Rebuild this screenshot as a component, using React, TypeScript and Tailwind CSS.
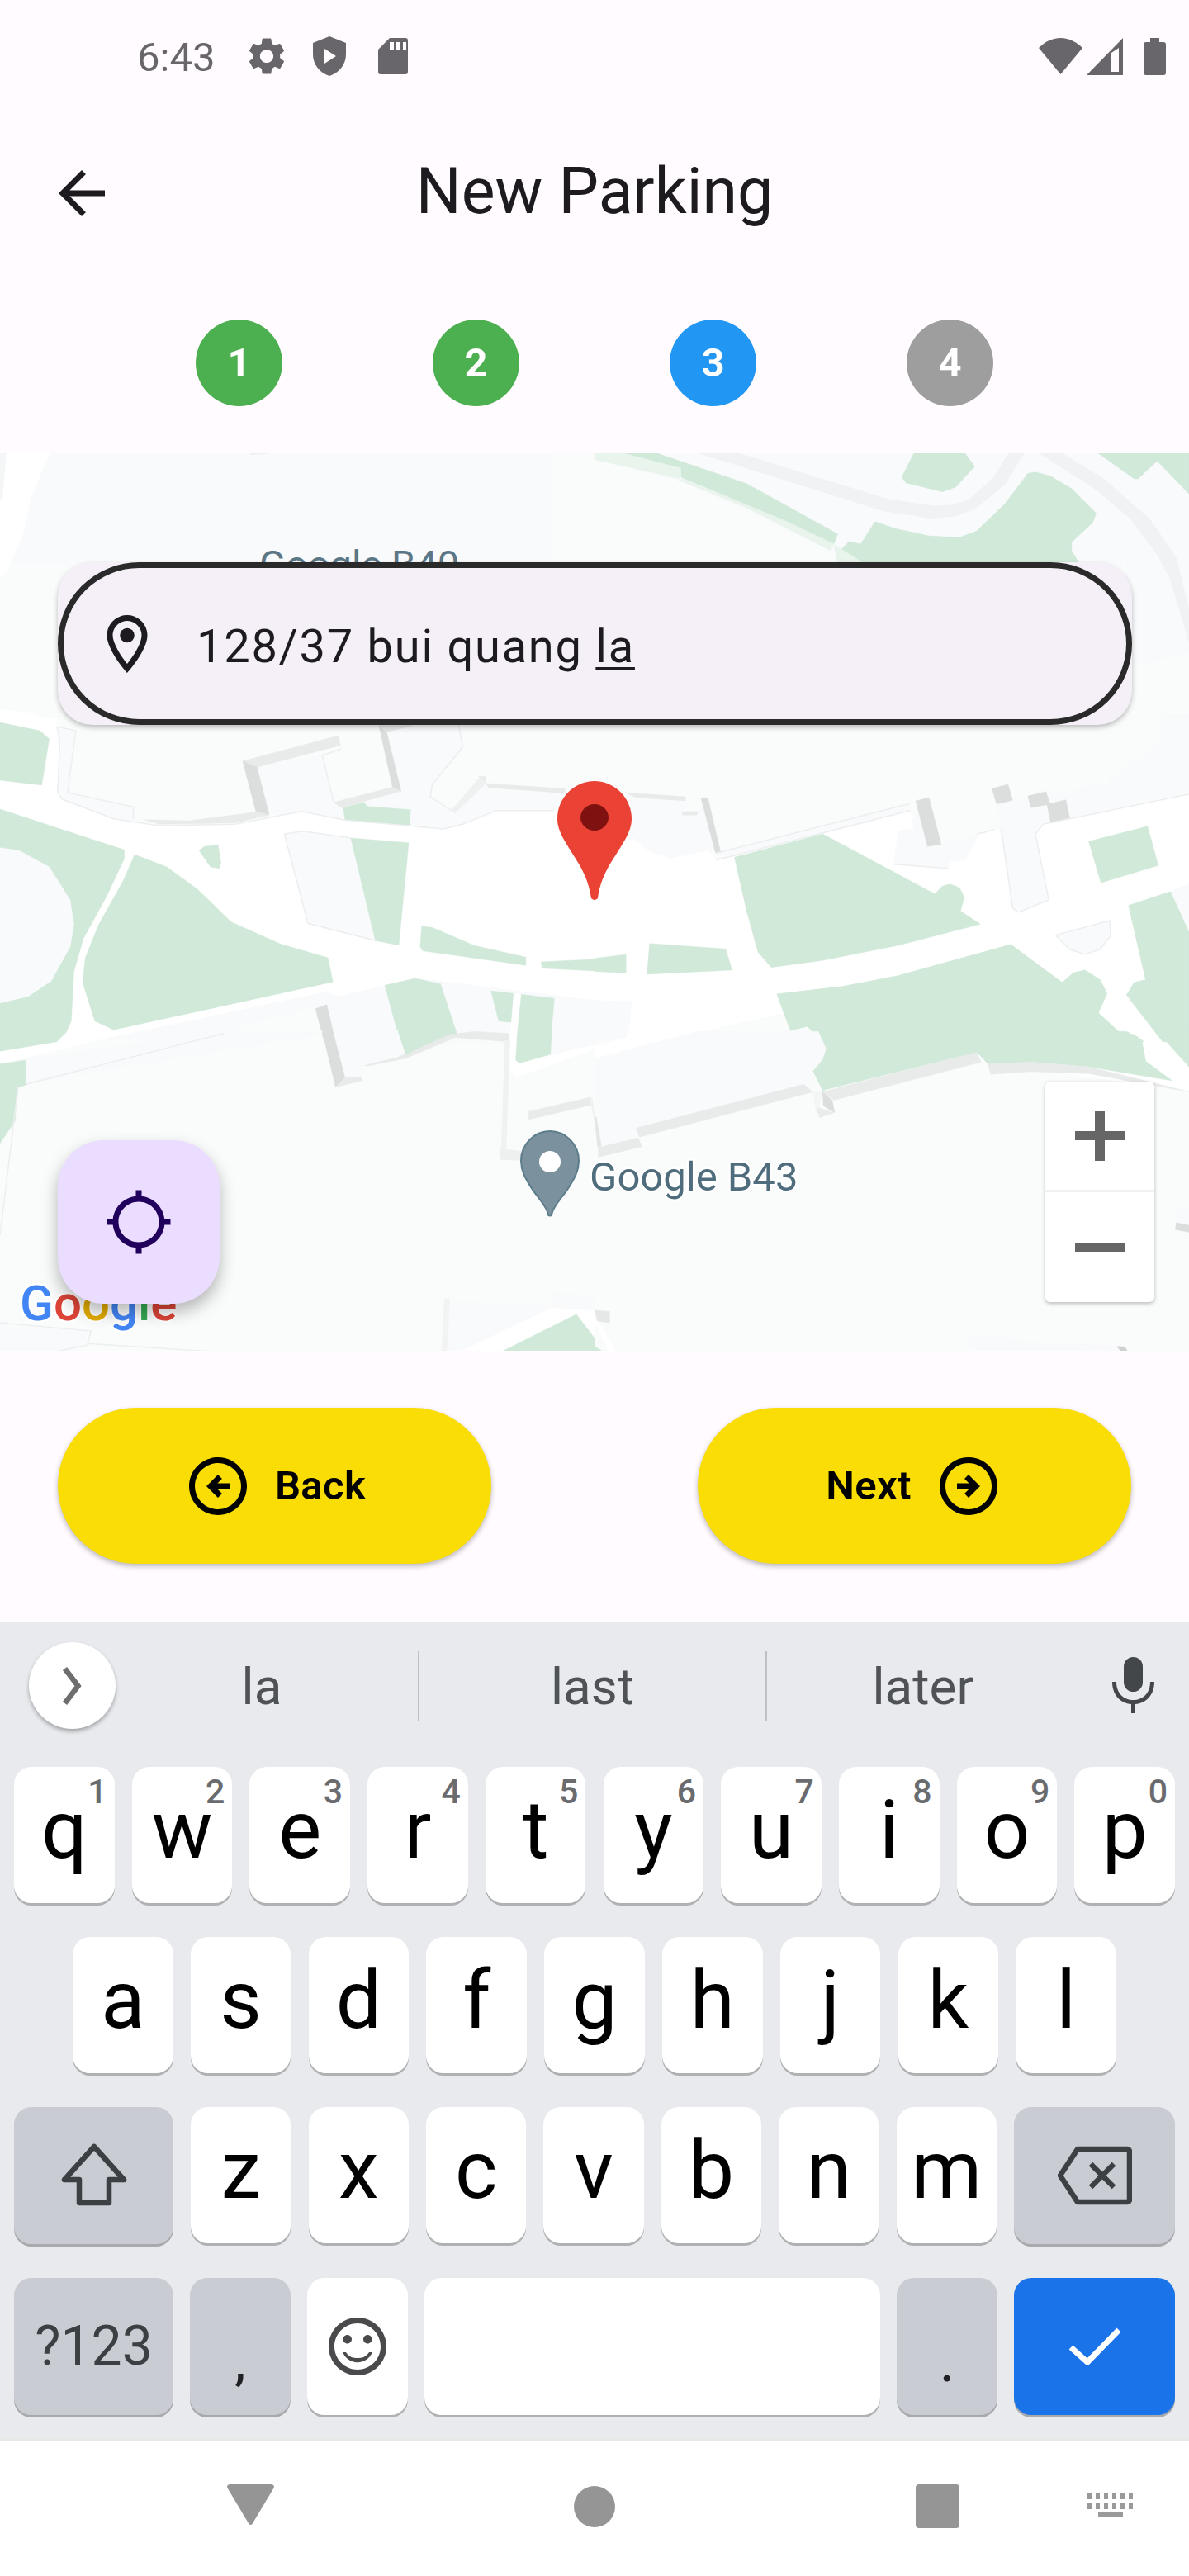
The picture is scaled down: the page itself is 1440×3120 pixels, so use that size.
import React from "react";

const GREEN = "#d0e9d9";
const LOT = "#f9fafc";
const SIDE = "#e9eaea";
const DARK = "#dcdddd";
const ROAD = "#f1f2f3";
const LINE = "#eceeef";

type Shape = [string, string];

const Z2 = "translate(0 -9) scale(.9184 .3571)";
const Z8 = "translate(0 321) scale(.4592 .3333)";
const Z9 = "translate(720 321) scale(.4604 .3333)";
const Z10 = "translate(0 701) scale(.4592 .3368)";
const Z11 = "translate(720 701) scale(.4604 .3368)";
const Z12 = "translate(720 -4) scale(.4604 .3333)";

function Shapes({ t, items }: { t: string; items: Shape[] }) {
  return (
    <g transform={t}>
      {items.map(([c, p], i) => (
        <polygon key={i} fill={c} points={p} stroke={c} strokeWidth="1" strokeLinejoin="round" />
      ))}
    </g>
  );
}

function Lines({ t, items }: { t: string; items: string[] }) {
  return (
    <g transform={t} fill="none" stroke={LINE} strokeWidth="1.500">
      {items.map((p, i) => (
        <polyline key={i} points={p} vectorEffect="non-scaling-stroke" />
      ))}
    </g>
  );
}

const top12: Shape[] = [
  [LOT, "0,10 1564,10 1564,735 1400,790 1400,410 700,410 620,360 220,110 0,35"],
  ["#e8f4ec", "0,35 225,105 228,65 75,10 0,10"],
  ["#e8f4ec", "220,108 400,210 620,365 630,340 500,255 230,105"],
  ["#e8f4ec", "630,345 655,365 710,412 640,412"],
  [GREEN, "80,12 165,12 400,122 640,305 630,340 500,255 228,100 228,65"],
  [GREEN, "650,360 670,332 700,342 738,260 790,285 880,312 960,318 1005,295 1080,195 1140,85 1160,80 1200,95 1255,140 1320,230 1310,265 1255,335 1255,365 1275,412 710,412"],
  [GREEN, "840,12 975,12 1000,60 950,135 915,152 820,120 808,100"],
  [GREEN, "1325,12 1564,12 1564,160 1480,40 1430,105 1420,105"],
  [ROAD, "275,12 380,12 770,178 895,204 940,200 985,180 1050,100 1090,12 1130,12 1080,125 1000,215 950,240 890,250 760,222"],
  [ROAD, "1170,12 1230,12 1340,105 1460,250 1530,390 1564,580 1564,700 1515,470 1480,380 1410,250 1310,135"],
];

const top2: Shape[] = [
  [LOT, "65,25 730,25 730,400 0,400 0,450 10,420 30,300 40,180"],
  ["#ffffff", "0,25 65,25 40,180 30,300 10,420 0,450"],
  ["#f4f5f6", "0,25 8,25 3,180 0,185"],
  ["#ffffff", "0,895 40,905 75,945 95,990 0,990"],
  ["#eeeff0", "330,25 355,25 330,30"],
];

const a8: Shape[] = [
  ["#fafbfb", "150,-10 1568,-10 1568,420 1460,335 1310,335 1220,385 1170,402 910,370 795,338 620,385 420,390 300,365 165,295 152,270 158,80 150,30"],
  [LOT, "150,30 200,45 178,270 352,322 352,365 420,390 300,365 165,295 152,270 158,80"],
  [LOT, "678,178 850,130 880,305 710,350"],
  [LOT, "710,350 880,305 905,325 905,365 795,338"],
  [LOT, "1085,390 1085,332 970,320 960,305 1058,265 1020,50 1210,25 1220,105 1140,240 1135,285 1190,335 1200,345 1270,235 1290,252 1490,272 1460,335 1310,335 1220,385 1170,402"],
  [SIDE, "640,155 892,63 898,98 678,178"],
  [DARK, "640,155 678,178 710,350 675,340"],
  [SIDE, "380,368 500,372 680,340 710,352 620,380 420,385"],
  [DARK, "1000,30 1020,50 1058,265 1035,250"],
  [SIDE, "1035,250 1058,265 900,325 880,305"],
  [SIDE, "1000,30 1020,50 1090,26 1000,26"],
  [SIDE, "1262,210 1282,212 1280,236 1490,256 1490,272 1290,252"],
  ["#eff0f0", "1265,215 1282,235 1200,345 1190,335"],
  [GREEN, "0,15 105,45 130,75 110,243 0,225"],
  [GREEN, "905,325 960,305 970,320 1083,332 1080,390 910,368"],
  [LOT, "750,420 800,410 925,435 990,808 812,745"],
  [GREEN, "925,435 1078,452 1052,825 990,808"],
  [GREEN, "525,480 540,465 575,460 583,525 578,545 555,540"],
  [GREEN, "1112,755 1140,760 1250,825 1387,868 1387,898 1115,845 1108,830"],
  [GREEN, "1427,885 1568,875 1568,918 1430,908"],
  [GREEN, "355,495 440,540 520,620 610,740 740,820 865,870 878,958 300,1132 250,1100 218,960 225,870 260,750 325,590"],
  [GREEN, "0,330 328,478 328,510 280,650 220,800 195,920 188,1100 175,1140 150,1175 0,1210"],
  [LOT, "0,470 50,480 130,540 185,660 195,750 185,830 135,955 75,1010 0,1035"],
];

const a8lines = [
  "150,30 200,45 178,270 352,322 352,365",
  "150,30 158,80 152,270 165,295 300,365 420,390 620,385 795,338 910,370 1170,402 1220,385 1310,335 1460,335",
  "850,135 880,305",
  "850,135 900,112",
  "1210,25 1220,105 1140,240 1135,285 1190,335",
  "750,420 800,410 925,435",
  "750,420 812,745 990,808",
];

const page: Shape[] = [
  ["#fafbfb", "0,1289 129,1258 393,1202 411,1207 503,1185 720,1212 764,1213 759,1257 805,1260 948,1228 1000,1260 1440,1322 1440,1640 0,1640"],
];

const a8b: Shape[] = [
  [LOT, "855,995 895,1012 1095,945 1568,1025 1568,1180 860,1180 832,1050 500,1165 280,1165"],
  [GREEN, "1015,970 1095,945 1162,965 1205,1145 1150,1175 1055,1175"],
  [GREEN, "1295,990 1355,1000 1348,1105 1315,1100"],
  ["#ffffff", "1355,1000 1375,1003 1362,1175 1345,1175"],
  [GREEN, "1375,1003 1462,1018 1452,1175 1362,1175"],
  [DARK, "832,1055 862,1040 885,1175 855,1175"],
];

const b9: Shape[] = [
  ["#fafbfb", "0,-10 1564,-10 1564,275 1180,385 1160,420 1195,660 1115,705 1100,690 1070,400 1010,420 975,515 935,520 930,545 787,530 800,410 840,400 830,335 600,420 320,515 300,480 200,508 140,480 90,420 0,335"],
  [LOT, "80,270 240,285 235,350 275,350 285,290 330,490 300,480 200,508 140,480 90,420 0,335"],
  [LOT, "320,490 830,310 830,335 600,420 320,515"],
  [LOT, "787,530 800,410 840,400 845,300 910,460 1010,420 975,515 935,520 930,545"],
  [LOT, "1055,310 1330,240 1330,340 1180,385 1160,420 1195,660 1115,705 1100,690"],
  [LOT, "1480,30 1490,90 1350,220 1350,245 1320,265 1335,335 1564,270 1564,-10 1500,-10"],
  [SIDE, "80,270 240,285 240,300 110,288"],
  [SIDE, "230,340 275,338 268,352 232,352"],
  [DARK, "280,290 298,288 332,488 318,488"],
  [DARK, "845,300 880,288 912,458 876,466"],
  [DARK, "1045,255 1088,240 1100,298 1058,312"],
  [DARK, "1140,282 1188,266 1198,312 1148,325"],
  [DARK, "1190,312 1240,296 1250,362 1200,378"],
  [GREEN, "368,505 600,420 895,638 915,610 935,602 960,615 973,650 963,700 1015,748 800,825 600,880 465,905 430,850 400,700"],
  [GREEN, "0,872 83,858 83,925 0,920"],
  [GREEN, "145,818 345,838 362,915 138,930"],
  [GREEN, "1300,447 1455,392 1483,535 1332,598"],
  [LOT, "1213,788 1355,735 1358,790 1330,840 1290,857 1250,840"],
  [LOT, "1515,630 1564,600 1564,780"],
  [LOT, "0,1027 97,1030 88,1160 0,1170"],
  [GREEN, "480,1002 650,975 800,935 930,885 1095,822 1230,960 1260,925 1290,915 1330,950 1348,1000 1325,1070 1380,1140 1420,1150 1445,1175 600,1175 560,1120 515,1135"],
  [GREEN, "1405,680 1515,630 1564,780 1564,1175 1495,1175 1430,1060 1400,1005 1420,960 1450,950"],
];

const b9lines = [
  "320,490 830,310",
  "320,515 830,335",
  "1564,275 1180,385",
  "1050,405 1010,420",
  "787,530 930,545",
  "1070,400 1100,690 1115,705 1195,660 1160,420 1180,385",
  "1213,788 1355,735 1358,790 1330,840 1290,857 1250,840 1213,788",
];

const c10: Shape[] = [
  [GREEN, "0,115 70,100 70,190 45,200 40,320 0,400"],
  [LOT, "68,100 590,-5 850,-5 850,5 68,188"],
  [LOT, "878,-5 1050,-5 1070,80 960,120 955,160 910,165"],
  [DARK, "850,-2 878,-2 910,165 885,198"],
  [SIDE, "910,165 955,160 955,175 885,198"],
  [SIDE, "960,120 1050,90 1180,10 1250,-2 1345,5 1340,35 1200,20 1070,95 970,122"],
  [GREEN, "1050,-2 1200,-2 1070,80"],
  ["#ffffff", "1345,-2 1345,140 1360,165 1568,60 1568,45 1370,112 1360,100 1365,-2"],
  [GREEN, "1365,-2 1455,-2 1452,80 1370,112 1360,100"],
  [LOT, "1460,-2 1568,-2 1568,45 1455,80"],
  ["#f0f1f1", "1332,30 1345,30 1335,420 1322,420"],
  ["#eeefef", "1318,420 1375,428 1375,462 1318,458"],
  [SIDE, "1395,285 1555,235 1560,262 1395,315"],
  ["#f0f1f1", "1555,235 1562,235 1568,300 1568,320"],
  [LOT, "1175,960 1455,990 1200,1158 1165,1158"],
  [LOT, "1455,935 1568,945 1568,1000 1455,990"],
  ["#ffffff", "1200,1158 1455,992 1568,1002 1568,1158"],
  [GREEN, "1310,1158 1520,1015 1568,1100 1568,1158"],
  [LOT, "0,1050 230,1075 225,1120 120,1158 0,1158"],
  ["#f2f3f3", "1172,960 1186,960 1178,1158 1165,1158"],
];

const c10lines = ["48,195 0,730", "0,1045 240,1075 230,1125 120,1158", "230,1120 660,1158", "68,188 590,5"];

const d11: Shape[] = [
  ["#ffffff", "0,50 85,20 88,-2 270,-2 0,95"],
  [LOT, "0,95 270,-2 590,-2 610,60 600,100 575,140 575,190 550,190 115,345 110,375 10,415"],
  [SIDE, "110,345 550,188 575,215 118,378"],
  [SIDE, "10,415 115,380 125,412 10,450"],
  ["#e4e5e5", "0,305 5,305 18,410 8,415"],
  ["#f4f5f5", "575,215 600,215 590,270 585,308"],
  [SIDE, "600,215 1005,72 1018,108 630,245"],
  [DARK, "600,215 625,245 632,290 602,265"],
  [SIDE, "585,270 630,290 592,308"],
  [GREEN, "590,-2 610,60 600,100 575,140 600,210 1005,72 1035,115 1150,108 1300,125 1520,175 1450,105 1440,30 1400,-2"],
  [GREEN, "1480,-2 1564,125 1564,-2"],
  ["#e9eaea", "1035,115 1150,108 1300,125 1450,175 1564,215 1300,150 1150,142 1042,152"],
  [LOT, "1540,630 1564,628 1564,690 1530,685"],
  [DARK, "1530,685 1564,695 1564,720 1528,710"],
  [LOT, "990,1095 1375,1130 1400,1160 990,1160"],
  ["#cfd0d0", "1375,1130 1395,1132 1408,1160 1390,1160"],
  ["#e6e7e7", "0,1000 40,1005 40,1045 8,1040"],
  ["#ffffff", "0,1040 10,1040 60,1160 40,1160"],
  [GREEN, "0,1130 35,1160 0,1160"],
];

function MapArt() {
  return (
    <svg viewBox="0 0 1440 1087" className="block w-[1440px] h-[1087px]">
      <rect x="0" y="0" width="1440" height="1087" fill="#fafbfb" />
      <g transform="translate(0 -549)">
        <rect x="0" y="870" width="1440" height="480" fill="#ffffff" />
      </g>
      <Shapes t={Z2} items={top2} />
      <Shapes t={Z12} items={top12} />
      <Shapes t={Z8} items={a8} />
      <Shapes t={Z9} items={b9} />
      <Shapes t="translate(0 -549)" items={page} />
      <Shapes t={Z8} items={a8b} />
      <Shapes t={Z9} items={b9.slice(-3)} />
      <Shapes t={Z10} items={c10} />
      <Shapes t={Z11} items={d11} />
      <Lines t={Z8} items={a8lines} />
      <Lines t={Z9} items={b9lines} />
      <Lines t={Z10} items={c10lines} />
      <g transform="translate(0 -549)" fontFamily="Roboto, sans-serif">
        <text x="314" y="700" fontSize="47" fill="#5b7685">Google B40</text>
        <path d="M666 1370c-19 0-35 16-35 36 0 12 5 21 14 35 9 13 17 20 19 30 0 2 4 2 4 0 2-10 10-17 19-30 9-14 14-23 14-35 0-20-16-36-35-36z" fill="#7b919d" stroke="#5c7d8c" strokeWidth="2" />
        <ellipse cx="666" cy="1407" rx="13" ry="13" fill="#ffffff" />
        <text x="714" y="1442" fontSize="49" fill="#4f6d7c" stroke="#ffffff" strokeWidth="5" paintOrder="stroke" strokeLinejoin="round">Google B43</text>
        <text x="24" y="1599" fontSize="60" fontWeight="500" stroke="#ffffff" strokeWidth="5" paintOrder="stroke" strokeLinejoin="round">
          <tspan fill="#4285f4">G</tspan>
          <tspan fill="#db4437">o</tspan>
          <tspan fill="#e2ab00">o</tspan>
          <tspan fill="#4285f4">g</tspan>
          <tspan fill="#34a853">l</tspan>
          <tspan fill="#db4437">e</tspan>
        </text>
        <path d="M720 946C696 946 675 966 675 992C675 1002 680 1013 689 1027C700 1045 712 1060 716 1088Q720 1092 724 1088C728 1060 740 1045 751 1027C760 1013 765 1002 765 992C765 966 744 946 720 946Z" fill="#ea4335" />
        <ellipse cx="720" cy="990" rx="17" ry="16" fill="#7f1110" />
      </g>
    </svg>
  );
}

function StatusBar() {
  return (
    <div className="h-[136px] flex items-center pl-[166px] pr-[28px] text-[#68666a]">
      <span className="text-[49px] leading-none pt-[3px] w-[135px]">6:43</span>
      <svg viewBox="0 0 24 24" className="w-[54px] h-[54px] -ml-[5px]" fill="#68666a">
        <path d="M19.14 12.94c.04-.3.06-.61.06-.94 0-.32-.02-.64-.07-.94l2.03-1.58c.18-.14.23-.41.12-.61l-1.92-3.32c-.12-.22-.37-.29-.59-.22l-2.39.96c-.5-.38-1.03-.7-1.62-.94l-.36-2.54c-.04-.24-.24-.41-.48-.41h-3.84c-.24 0-.43.17-.47.41l-.36 2.54c-.59.24-1.13.57-1.62.94l-2.39-.96c-.22-.08-.47 0-.59.22L2.74 8.87c-.12.21-.08.47.12.61l2.03 1.58c-.05.3-.09.63-.09.94s.02.64.07.94l-2.03 1.58c-.18.14-.23.41-.12.61l1.92 3.32c.12.22.37.29.59.22l2.39-.96c.5.38 1.03.7 1.62.94l.36 2.54c.05.24.24.41.48.41h3.84c.24 0 .44-.17.47-.41l.36-2.54c.59-.24 1.13-.56 1.62-.94l2.39.96c.22.08.47 0 .59-.22l1.92-3.32c.12-.22.07-.47-.12-.61l-2.01-1.58zM12 15.6c-1.98 0-3.6-1.62-3.6-3.6s1.62-3.6 3.6-3.6 3.6 1.62 3.6 3.6-1.62 3.6-3.6 3.6z" />
      </svg>
      <svg viewBox="0 0 40 48" className="w-[40px] h-[48px] ml-[29px]" fill="#68666a">
        <path fillRule="evenodd" d="M20 0L40 8v14c0 12-8 22-20 26C8 44 0 34 0 22V8zM14 15v18l14-9z" />
      </svg>
      <svg viewBox="0 0 36 44" className="w-[36px] h-[44px] ml-[39px]" fill="#68666a">
        <path fillRule="evenodd" d="M14 0h19a3 3 0 013 3v38a3 3 0 01-3 3H3a3 3 0 01-3-3V14zM14 5v9h5V5zM22 5v9h5V5zM30 5v9h4V5z" />
      </svg>
      <div className="flex-1" />
      <svg viewBox="0 0 53 44" className="w-[53px] h-[44px]" fill="#68666a">
        <path d="M0 12C7 5 16 0 26.500 0S46 5 53 12L26.500 44z" />
      </svg>
      <svg viewBox="0 0 44 45" className="w-[44px] h-[45px] ml-[5px]">
        <path fill="#68666a" d="M44 0v45H0z" />
        <path fill="#fffbff" d="M30 18l9-6v29h-9z" />
      </svg>
      <svg viewBox="0 0 27 45" className="w-[27px] h-[45px] ml-[25px]" fill="#68666a">
        <path d="M8 0h11v5h5a3 3 0 013 3v34a3 3 0 01-3 3H3a3 3 0 01-3-3V8a3 3 0 013-3h5z" />
      </svg>
    </div>
  );
}

function Header() {
  return (
    <div className="h-[196px] grid grid-cols-[1fr_auto_1fr] items-center text-[#1d1b20]">
      <svg viewBox="0 0 24 24" className="w-[84px] h-[84px] ml-[57px]" fill="currentColor">
        <path d="M20 11H7.830l5.590-5.590L12 4l-8 8 8 8 1.410-1.410L7.830 13H20v-2z" />
      </svg>
      <h1 className="text-[77px] leading-none font-normal pb-[3px]">New Parking</h1>
      <div />
    </div>
  );
}

function Steps() {
  const steps: [string, string][] = [
    ["1", "bg-[#4caf50]"],
    ["2", "bg-[#4caf50]"],
    ["3", "bg-[#2196f3]"],
    ["4", "bg-[#9e9e9e]"],
  ];
  return (
    <div className="h-[217px] flex justify-center gap-[182px] pt-[55px]">
      {steps.map(([n, c]) => (
        <div key={n} className={`w-[105px] h-[105px] rounded-full ${c} flex items-center justify-center text-white text-[49px] font-bold leading-none`}>
          {n}
        </div>
      ))}
    </div>
  );
}

function MapBlock() {
  return (
    <div className="relative h-[1087px] overflow-hidden">
      <MapArt />
      <div className="absolute left-[70px] top-[132px] w-[1301px] h-[197px] rounded-[42px] bg-[#f5f0f8] shadow-[0_3px_6px_rgba(0,0,0,0.25)]">
        <div className="h-full rounded-full border-[7px] border-[#2a2a2a] flex items-center pl-[35px]">
          <svg viewBox="0 0 24 24" className="w-[84px] h-[84px]" fill="#1d1b20">
            <path d="M12 2C8.130 2 5 5.130 5 9c0 5.250 7 13 7 13s7-7.750 7-13c0-3.870-3.130-7-7-7zM7 9c0-2.760 2.240-5 5-5s5 2.240 5 5c0 2.880-2.880 7.190-5 9.880C9.920 16.210 7 11.850 7 9z" />
            <circle cx="12" cy="9" r="2.500" />
          </svg>
          <span className="ml-[42px] pt-[6px] text-[56px] leading-none tracking-[1.75px] text-[#1d1b20]">
            128/37 bui quang <span className="underline decoration-[3px] underline-offset-[6px]">la</span>
          </span>
        </div>
      </div>
      <div className="absolute left-[70px] top-[832px] w-[196px] h-[198px] rounded-[56px] bg-[#eaddff] shadow-[0_10px_20px_rgba(0,0,0,0.28)] flex items-center justify-center">
        <svg viewBox="0 0 24 24" className="w-[84px] h-[84px]" fill="#21005d">
          <path d="M20.940 11c-.460-4.170-3.770-7.480-7.940-7.940V1h-2v2.060C6.830 3.520 3.520 6.830 3.060 11H1v2h2.060c.460 4.170 3.770 7.480 7.940 7.940V23h2v-2.060c4.170-.460 7.480-3.770 7.940-7.940H23v-2h-2.060zM12 19c-3.870 0-7-3.130-7-7s3.130-7 7-7 7 3.130 7 7-3.130 7-7 7z" />
        </svg>
      </div>
      <div className="absolute left-[1266px] top-[761px] w-[132px] h-[267px] rounded-[6px] bg-white shadow-[0_2px_5px_rgba(0,0,0,0.25)] flex flex-col">
        <div className="h-[134px] flex items-center justify-center border-b-[3px] border-[#f0f1f1]">
          <svg viewBox="0 0 60 60" className="w-[60px] h-[60px]" fill="#666666">
            <path d="M24 0h12v24h24v11H36v25H24V35H0V24h24z" />
          </svg>
        </div>
        <div className="flex-1 flex items-center justify-center">
          <div className="w-[60px] h-[11px] bg-[#666666]" />
        </div>
      </div>
    </div>
  );
}

function Buttons() {
  return (
    <div className="h-[329px] px-[70px] pt-[69px] flex justify-between items-start">
      <button className="w-[525px] h-[189px] rounded-full bg-[#f9dd05] shadow-[0_3px_6px_rgba(0,0,0,0.28)] flex items-center justify-center gap-[27px] text-black text-[49px] font-semibold leading-none tracking-[.35px]">
        <svg viewBox="0 0 24 24" className="w-[84px] h-[84px]" fill="currentColor">
          <path d="M12 2C6.480 2 2 6.480 2 12s4.480 10 10 10 10-4.480 10-10S17.520 2 12 2zm0 18c-4.410 0-8-3.590-8-8s3.590-8 8-8 8 3.590 8 8-3.590 8-8 8z" />
          <path d="M12 8l-4 4 4 4 1.410-1.410L11.830 13H16v-2h-4.170l1.580-1.590z" />
        </svg>
        <span>Back</span>
      </button>
      <button className="w-[525px] h-[189px] rounded-full bg-[#f9dd05] shadow-[0_3px_6px_rgba(0,0,0,0.28)] flex items-center justify-center gap-[27px] text-black text-[49px] font-semibold leading-none tracking-[.35px]">
        <span>Next</span>
        <svg viewBox="0 0 24 24" className="w-[84px] h-[84px]" fill="currentColor">
          <path d="M12 2C6.480 2 2 6.480 2 12s4.480 10 10 10 10-4.480 10-10S17.520 2 12 2zm0 18c-4.410 0-8-3.590-8-8s3.590-8 8-8 8 3.590 8 8-3.590 8-8 8z" />
          <path d="M12 8l-1.410 1.410L12.170 11H8v2h4.170l-1.580 1.590L12 16l4-4z" />
        </svg>
      </button>
    </div>
  );
}

function Key({ label, hint }: { label: string; hint?: string }) {
  return (
    <div className="relative flex-1 h-[165px] rounded-[21px] bg-white shadow-[0_3px_0_#b0b1b3] flex justify-center pt-[28px] text-[98px] leading-[98px] text-black">
      {label}
      {hint ? (
        <span className="absolute right-[9px] top-[8px] text-[41px] leading-[44px] font-medium text-[#6a6b6e]">{hint}</span>
      ) : null}
    </div>
  );
}

function Suggestions() {
  return (
    <div className="h-[175px] flex items-start text-[62px] leading-[62px] text-[#4f5357]">
      <div className="w-[128px] h-[175px] pl-[35px] pt-[24px]">
        <div className="w-[105px] h-[105px] rounded-full bg-white shadow-[0_3px_5px_rgba(0,0,0,0.3)] flex items-center justify-center">
          <svg viewBox="0 0 24 48" className="w-[29px] h-[48px]" fill="none" stroke="#6e6e6e" strokeWidth="6.500">
            <path d="M3 3l16 21-16 21" />
          </svg>
        </div>
      </div>
      <div className="w-[378px] text-center pt-[47px]">la</div>
      <div className="w-[2px] h-[84px] mt-[35px] bg-[#bdc1c6]" />
      <div className="w-[419px] text-center pt-[47px]">last</div>
      <div className="w-[2px] h-[84px] mt-[35px] bg-[#bdc1c6]" />
      <div className="w-[378px] text-center pt-[47px]">later</div>
      <svg viewBox="0 0 51 68" className="w-[51px] h-[68px] mt-[42px] ml-[40px]" fill="#44474a">
        <rect x="14" y="0" width="23" height="42" rx="11.500" />
        <path d="M0 30h5c0 14 9 22 20.500 22S46 44 46 30h5c0 16-10 26-23 27v11h-5V57C10 56 0 46 0 30z" />
      </svg>
    </div>
  );
}

function SpecialKey({ children, w, blue }: { children: React.ReactNode; w: string; blue?: boolean }) {
  return (
    <div className={`${w} h-[166px] rounded-[21px] ${blue ? "bg-[#1a73e8]" : "bg-[#c9ccd3]"} shadow-[0_3px_0_#a8a9ac] flex items-center justify-center shrink-0`}>
      {children}
    </div>
  );
}

function Keyboard() {
  const row1 = ["q", "w", "e", "r", "t", "y", "u", "i", "o", "p"];
  const hints = ["1", "2", "3", "4", "5", "6", "7", "8", "9", "0"];
  const row2 = ["a", "s", "d", "f", "g", "h", "j", "k", "l"];
  const row3 = ["z", "x", "c", "v", "b", "n", "m"];
  return (
    <div className="h-[988px] bg-[#e8eaed]">
      <Suggestions />
      <div className="flex flex-col gap-[41px]">
        <div className="flex gap-[21.200px] px-[17px]">
          {row1.map((k, i) => (
            <Key key={k} label={k} hint={hints[i]} />
          ))}
        </div>
        <div className="flex gap-[21.200px] px-[88px]">
          {row2.map((k) => (
            <Key key={k} label={k} />
          ))}
        </div>
        <div className="flex gap-[21.200px] px-[17px]">
          <SpecialKey w="w-[193px]">
            <svg viewBox="0 0 80 76" className="w-[80px] h-[76px] -mt-[3px]" fill="none" stroke="#3c4043" strokeWidth="6.500" strokeLinejoin="round">
              <path d="M40 4L76 44H58V72H22V44H4z" />
            </svg>
          </SpecialKey>
          {row3.map((k) => (
            <Key key={k} label={k} />
          ))}
          <SpecialKey w="w-[195px]">
            <svg viewBox="0 0 90 72" className="w-[90px] h-[72px]" fill="none" stroke="#3c4043" strokeWidth="6.500" strokeLinejoin="round">
              <path d="M24 4H84a3 3 0 013 3V65a3 3 0 01-3 3H24L3 36z" />
              <path d="M40 22l28 28M68 22L40 50" />
            </svg>
          </SpecialKey>
        </div>
        <div className="flex gap-[20px] px-[17px]">
          <SpecialKey w="w-[193px]">
            <span className="text-[66px] leading-none text-[#3c4043]">?123</span>
          </SpecialKey>
          <div className="w-[122px] h-[166px] rounded-[21px] bg-[#c9ccd3] shadow-[0_3px_0_#a8a9ac] flex justify-center pt-[73px] text-[60px] leading-[60px] font-medium text-[#202124]">,</div>
          <div className="w-[122px] h-[166px] rounded-[21px] bg-white shadow-[0_3px_0_#b0b1b3] flex items-center justify-center">
            <svg viewBox="0 0 24 24" className="w-[84px] h-[84px]" fill="#4a4a4d">
              <path d="M11.990 2C6.470 2 2 6.480 2 12s4.470 10 9.990 10C17.520 22 22 17.520 22 12S17.520 2 11.990 2zM12 20c-4.420 0-8-3.580-8-8s3.580-8 8-8 8 3.580 8 8-3.580 8-8 8zm3.500-9c.830 0 1.500-.670 1.500-1.500S16.330 8 15.500 8 14 8.670 14 9.500s.670 1.500 1.500 1.500zm-7 0c.830 0 1.500-.670 1.500-1.500S9.330 8 8.500 8 7 8.670 7 9.500 7.670 11 8.500 11zm3.500 6.500c2.330 0 4.310-1.460 5.110-3.500H16c-.700 1.190-1.990 2-3.500 2h-1c-1.510 0-2.800-.810-3.500-2H6.890c.800 2.040 2.780 3.500 5.110 3.500z" />
            </svg>
          </div>
          <div className="flex-1 h-[166px] rounded-[21px] bg-white shadow-[0_3px_0_#b0b1b3]" />
          <div className="w-[122px] h-[166px] rounded-[21px] bg-[#c9ccd3] shadow-[0_3px_0_#a8a9ac] flex justify-center pt-[75px] text-[60px] leading-[60px] font-medium text-[#202124]">.</div>
          <SpecialKey w="w-[195px]" blue>
            <svg viewBox="0 0 62 46" className="w-[62px] h-[46px]" fill="none" stroke="#ffffff" strokeWidth="7">
              <path d="M2 24l20 18L60 3" />
            </svg>
          </SpecialKey>
        </div>
      </div>
    </div>
  );
}

function NavBar() {
  const dots = Array.from({ length: 12 });
  return (
    <div className="h-[167px] bg-white border-t-[3px] border-[#e8e8e8] flex items-start pt-[52px] pl-[275px]">
      <svg viewBox="0 0 57 50" className="w-[57px] h-[50px] mt-[1px]" fill="#959595">
        <path d="M3 0h51a3 3 0 012.500 4.500L30.500 48a2.500 2.500 0 01-4 0L.500 4.500A3 3 0 013 0z" />
      </svg>
      <div className="w-[50px] h-[50px] rounded-full bg-[#959595] ml-[363px] mt-[3px]" />
      <div className="w-[53px] h-[53px] rounded-[4px] bg-[#959595] ml-[364px] mt-[1px]" />
      <div className="w-[55px] ml-[155px] mt-[12px] flex flex-col items-center gap-[3px]">
        <div className="grid grid-cols-6 gap-x-[5px] gap-y-[5px] w-[55px]">
          {dots.map((_, i) => (
            <div key={i} className="h-[7px] w-[5px] bg-[#9a9a9a]" />
          ))}
        </div>
        <div className="w-[30px] h-[6px] bg-[#9a9a9a]" />
      </div>
    </div>
  );
}

export default function App() {
  return (
    <div className="w-[1440px] h-[3120px] overflow-hidden bg-[#fffbff] font-['Roboto',sans-serif]">
      <StatusBar />
      <Header />
      <Steps />
      <MapBlock />
      <Buttons />
      <Keyboard />
      <NavBar />
    </div>
  );
}
